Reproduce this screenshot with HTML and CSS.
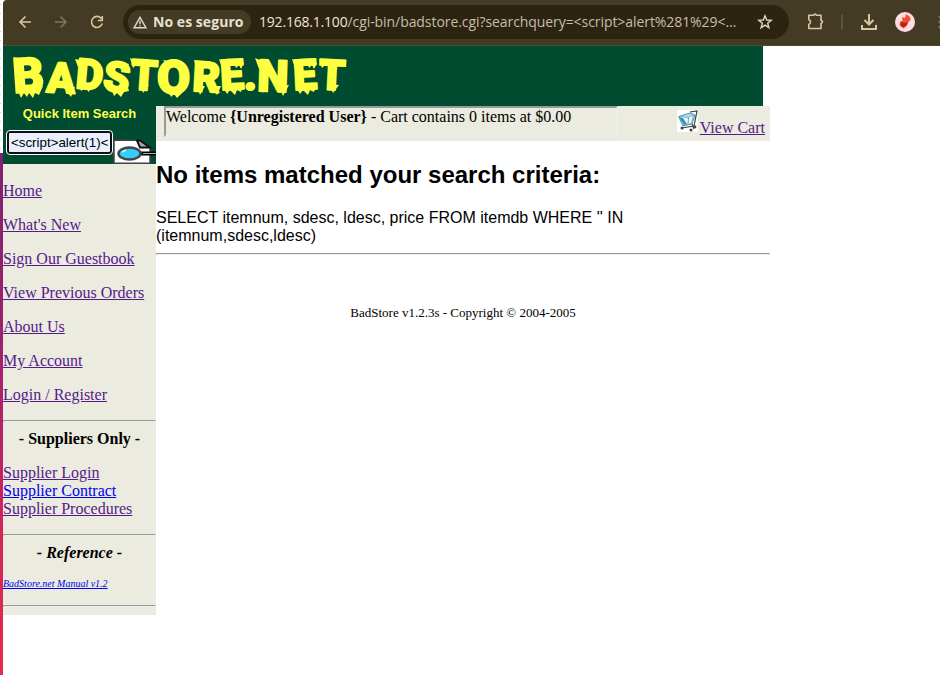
FILE: index.html
```html
<!DOCTYPE html>
<html lang="en">
<head>
<meta charset="utf-8">
<title>BadStore.net</title>
<link rel="stylesheet" href="styles.css">
</head>
<body>
<div class="desktop"></div>
<div class="window">
  <div class="toolbar">
    <svg class="nav" width="120" height="45" viewBox="3 0 120 45" fill="none" stroke="#d8c6a0" stroke-width="1.6">
      <path d="M31 22H20M25.500 16.500L20 22l5.500 5.500"/>
      <path stroke="#81765b" d="M55 22h11M60.500 16.500L66 22l-5.500 5.500"/>
      <path d="M101.500 18.700A5.500 5.500 0 1 0 102.300 23.500M102.300 16v4.500h-4.500"/>
    </svg>
    <div class="address">
      <div class="security">
        <svg width="14" height="13" viewBox="0 0 14 13" fill="none" stroke="#e0dacd" stroke-width="1.400"><path d="M7 1.300L13 11.800H1zM7 4.800v3.500M7 9.200v1.300"/></svg>
        <span>No es seguro</span>
      </div>
      <div class="url"><span class="host">192.168.1.100</span><span class="path">/cgi-bin/badstore.cgi?searchquery=&lt;script&gt;alert%281%29&lt;…</span></div>
      <svg class="star" width="16" height="16" viewBox="0 0 16 16" fill="none" stroke="#ddd4bf" stroke-width="1.400"><path d="M8 1.800l1.700 4.200 4.500.3-3.500 2.900 1.200 4.500L8 11.200l-3.900 2.500 1.200-4.500-3.500-2.900 4.500-.3z"/></svg>
    </div>
    <svg class="tools" width="151" height="45" viewBox="789 0 151 45" fill="none" stroke="#d8c6a0" stroke-width="1.600">
      <path stroke-linejoin="round" d="M808.800 15.300h4.700q1.500-2.300 3 0h4.500v5q3 1.500 0 3.200v5h-12.200v-4q3.500-2.500 0-5z"/>
      <path stroke="#665b3f" d="M842 14.500v15"/>
      <path stroke-width="2" d="M869 14v10M864.500 20l4.500 4.500 4.500-4.500M862 25v4h14v-4"/>
      <circle cx="905" cy="22" r="10" fill="#ffdce1" stroke="none"/>
      <path fill="#ee4f32" stroke="none" d="M902 17l3 1 1-4 4 3 .5 3-3 3-1 3-3 2.500-4-3 .5-4 2.500-.5z"/>
      <path fill="#a9261a" stroke="none" d="M901 22l4 1 3-1-1 3-3 2-3-1z"/>
      <g fill="#81765b" stroke="none"><circle cx="940" cy="17" r="1.500"/><circle cx="940" cy="22" r="1.500"/><circle cx="940" cy="27" r="1.500"/></g>
    </svg>
  </div>
  <header class="banner">
    <svg width="360" height="60" viewBox="3 46 360 60">
      <text class="wordmark"><tspan class="big" x="14" y="93" rotate="-4">B</tspan><tspan x="46" y="92" rotate="3">A</tspan><tspan x="75" y="88" rotate="5">D</tspan><tspan x="102" y="90" rotate="7">S</tspan><tspan x="130" y="89" rotate="4">T</tspan><tspan class="round" x="157" y="94">O</tspan><tspan x="192" y="91" rotate="3">R</tspan><tspan x="221" y="90" rotate="-3">E</tspan><tspan x="244" y="90">.</tspan><tspan class="wide" x="257" y="91" rotate="2">N</tspan><tspan x="294" y="90" rotate="-3">E</tspan><tspan x="318" y="89" rotate="3">T</tspan></text>
      <path class="drips" d="M13 57l10 2-5 7zM16 86l5 12 3-5 3 4 2-4 4 5 2-5 4 2 4-9zM64 88l7 9 4-10zM75 59l10 2-7 6zM79 84l2 7 4-3 4 4 2-5zM111 88l3 8 3-3 4 4 3-5 5-1-2-7zM130 58l9 4-6 6zM140 84l3 9 6-8zM168 90l3 7 3-3 3 4 7-7zM194 60l9 2-7 6zM197 86l3 9 5-9zM211 86l6 9 4-9zM219 59l8 3-5 6zM223 87l4 7 3-4 5 5 2-5 4 2 2-6zM255 58l10 4-6 7zM259 86l3 7 5-7zM279 86l4 10 6-11zM292 59l8 3-5 6zM296 87l4 7 3-4 5 5 2-5 4 2 2-6zM319 59l9 3-6 6zM329 84l4 9 6-8z"/>
      <path class="bite" d="M29 61l2 6 3-3 3 3 2-4zM119 62l2 6 3-3 2 4 3-5zM234 62l2 6 3-3 2 4 3-6zM307 62l2 6 3-3 2 4 3-6zM163 60l3 4 3-3z" fill="none"/>
    </svg>
  </header>
  <div class="columns">
    <aside>
      <div class="search">
        <b>Quick Item Search</b>
        <div class="search-row">
          <input type="text" value="&lt;script&gt;alert(1)&lt;/script&gt;" aria-label="Search">
          <svg width="43" height="25" viewBox="113 139 43 25">
            <path fill="#fff" stroke="#444" stroke-width="1.500" d="M114 140.200h26l10 6.500V163.300H114z"/>
            <path fill="#aaa" stroke="#111" stroke-width="2" d="M137 140.500h3l10 7h-10z"/>
            <path stroke="#000" stroke-width="4" d="M140 153.500h16"/><path stroke="#aaa" stroke-width="1" d="M143 153.500h13"/>
            <ellipse cx="129.500" cy="153.500" rx="11" ry="6" fill="#33cdfc" stroke="#444" stroke-width="2.500"/>
            <path stroke="#c9f5ff" stroke-width="1.500" d="M122 152l4-2"/>
          </svg>
        </div>
      </div>
      <nav>
        <p><a href="#">Home</a></p>
        <p><a href="#">What's New</a></p>
        <p><a href="#">Sign Our Guestbook</a></p>
        <p><a href="#">View Previous Orders</a></p>
        <p><a href="#">About Us</a></p>
        <p><a href="#">My Account</a></p>
        <p><a href="#">Login / Register</a></p>
        <hr>
        <p class="section"><b>- Suppliers Only -</b></p>
        <p><a href="#">Supplier Login</a><br><a class="new" href="#">Supplier Contract</a><br><a href="#">Supplier Procedures</a></p>
        <hr>
        <p class="section"><b><i>- Reference -</i></b></p>
        <p class="manual"><a class="new" href="#"><i>BadStore.net Manual v1.2</i></a></p>
        <hr>
      </nav>
    </aside>
    <main>
      <div class="status">
        <div class="welcome">Welcome <b>{Unregistered User}</b> - Cart contains 0 items at $0.00</div>
        <div class="cart">
          <svg width="22" height="22" viewBox="0 0 22 22">
            <path fill="#fff" d="M0 0h21v22H0z"/>
            <path fill="#a9dced" stroke="#47778d" stroke-width=".8" d="M1.500 6.500L13 3l5 2-3 9-9 2z"/>
            <path fill="#e9fbff" stroke="#5b9fbd" stroke-width=".7" d="M1.500 6.500l10 1 5-3-2 9-6 1z"/>
            <path fill="#2d93bd" d="M2 7l4 1 4 6-3 1z"/>
            <path fill="none" stroke="#477" stroke-width=".7" d="M11.500 7.500l-.5 6"/>
            <path fill="none" stroke="#354052" stroke-width="1.200" d="M13 2l7-1-3 15-12 2M15 14l2 5"/>
            <circle cx="5" cy="18" r="1.500" fill="#444"/><circle cx="14" cy="20" r="1.600" fill="#444"/><circle cx="18" cy="17" r="1.400" fill="#444"/>
          </svg>
          <a href="#">View Cart</a>
        </div>
      </div>
      <h2>No items matched your search criteria:</h2>
      <p class="query">SELECT itemnum, sdesc, ldesc, price FROM itemdb WHERE '' IN<br>(itemnum,sdesc,ldesc)</p>
      <hr>
      <footer>BadStore v1.2.3s - Copyright © 2004-2005</footer>
    </main>
  </div>
</div>
</body>
</html>
```
FILE: styles.css
```css
* { box-sizing: border-box; }
body {
  margin: 0;
  display: flex;
  height: 675px;
  overflow: hidden;
  background: #fff;
  font: 16px/18px "Liberation Serif", serif;
  color: #000;
}
svg { display: block; flex: none; }
.desktop {
  flex: none;
  width: 3px;
  background:
    linear-gradient(#7d2170, #a3216d 40%, #d82458 75%, #e12d49) 0 153px / 3px 522px no-repeat,
    repeating-linear-gradient(#fff 0 4px, #d8c8c8 4px 5px, #fff 5px 9px) 0 0 / 1px 100% no-repeat;
}
.window { width: 937px; }
.toolbar {
  display: flex;
  align-items: center;
  height: 46px;
  padding-bottom: 1px;
  background: #443b24;
  border-bottom: 1px solid #514833;
  border-top-left-radius: 4px;
}
.address {
  display: flex;
  align-items: center;
  width: 666px;
  height: 34px;
  padding: 0 16px 0 5px;
  border-radius: 17px;
  background: #2c2411;
  font: 14px/20px "Open Sans", sans-serif;
}
.security {
  display: flex;
  align-items: center;
  gap: 6px;
  width: 123px;
  height: 24px;
  padding-left: 5px;
  border-radius: 12px;
  background: #443b24;
  color: #e6e0d4;
  font-weight: 700;
  letter-spacing: 0.05px;
  white-space: nowrap;
}
.url { flex: 1; margin-left: 8px; white-space: nowrap; }
.host { color: #ece5d6; letter-spacing: -0.200px; }
.path { color: #c6bda9; letter-spacing: -0.070px; }
.banner { width: 760px; height: 60px; background: #004c30; }
.wordmark {
  font: 900 42px "Roboto", sans-serif;
  fill: #ffff42;
  stroke: #ffff42;
  stroke-width: 2px;
  stroke-linejoin: round;
}
.wordmark .big { font-size: 48px; }
.wordmark .round { font-size: 48px; }
.wordmark .wide { font-size: 44px; }
.drips { fill: #ffff42; }
.bite { fill: #ffff42; }
.columns { display: flex; align-items: flex-start; }
aside { width: 153px; background: #ebebdf; }
.search {
  height: 58px;
  background: #004c30;
  color: #ffff4c;
  text-align: center;
  font: 13px/15px "Liberation Sans", sans-serif;
}
.search b { display: block; }
.search-row { display: flex; align-items: flex-start; justify-content: space-between; padding: 10px 0 0 4px; }
.search-row svg { margin-top: 8px; }
.search input {
  width: 105px;
  height: 23px;
  padding: 1px 2px;
  border: 2px solid #101010;
  border-radius: 3px;
  outline: 1px solid #fff;
  outline-offset: 0;
  background: #e8f0fe;
  color: #000;
  font: 13.333px "Liberation Sans", sans-serif;
}
nav { display: flow-root; padding-top: 18px; }
p { margin: 0 0 16px; }
a { color: #551a8b; text-decoration: underline; }
a.new { color: #0000ee; }
hr {
  height: 2px;
  margin: 0 0 8px;
  border: 1px solid;
  border-color: #9a9a9a #ededed #ededed #9a9a9a;
}
.section { text-align: center; }
.manual { font-size: 10px; line-height: 11px; }
main { width: 614px; }
.status {
  display: flex;
  justify-content: space-between;
  align-items: flex-start;
  height: 35px;
  padding: 0 5px 0 8px;
  background: #ebebdf;
}
.welcome {
  width: 454px;
  height: 31px;
  border: 2px solid;
  border-color: #999 #ededed #ededed #999;
}
.cart { display: flex; align-items: flex-start; gap: 1px; padding-top: 4px; }
.cart a { margin-top: 9px; }
h2 { margin: 20px 0 21px; font: 700 24px/27px "Liberation Sans", sans-serif; }
.query { margin: 0 0 8px; font-family: "Liberation Sans", sans-serif; }
footer { margin-top: 50px; text-align: center; font-size: 13px; line-height: 15px; }
```
